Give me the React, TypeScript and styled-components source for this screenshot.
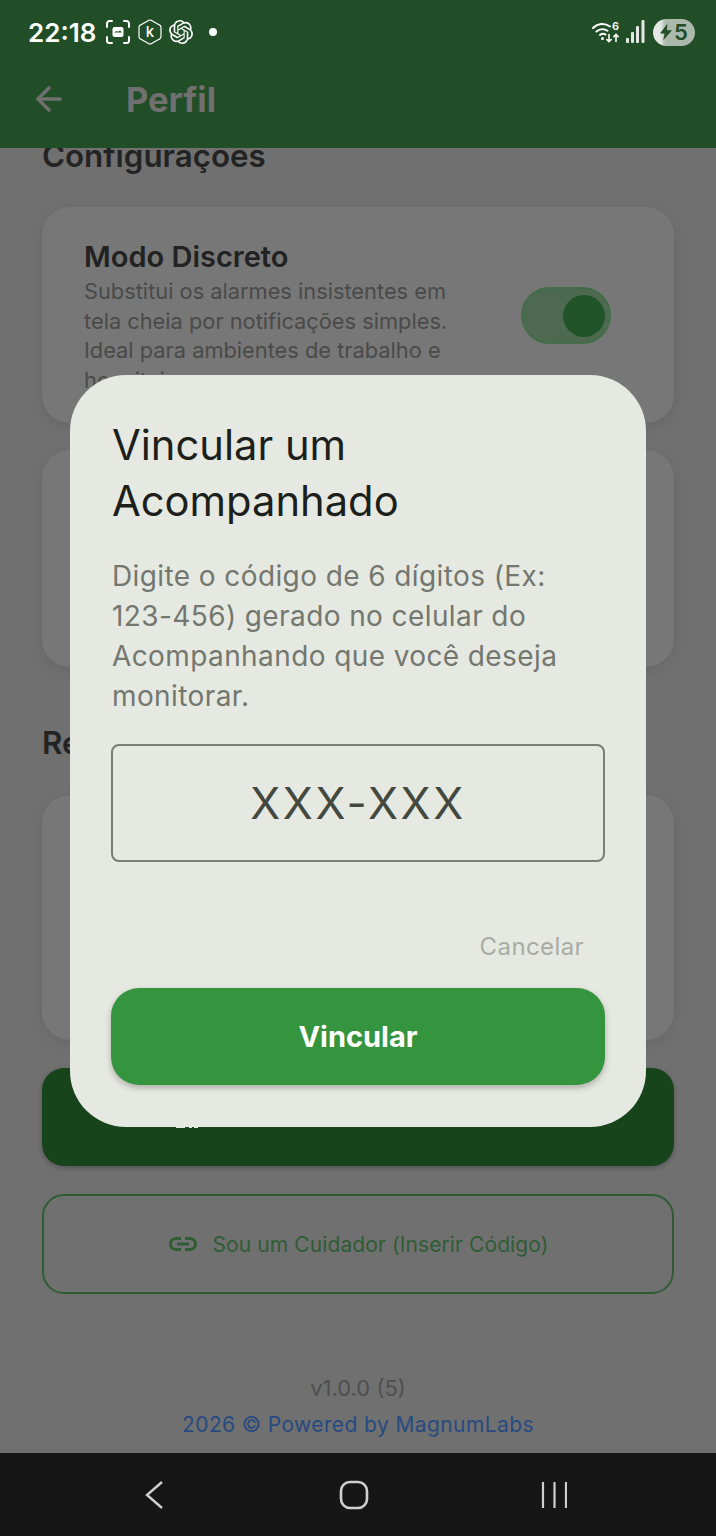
import { ArrowLeft } from "lucide-react";
import styled, { createGlobalStyle } from "styled-components";

const GlobalStyle = createGlobalStyle`
    html, body {
        margin: 0;
        padding: 0;
        background: #707070;
    }
    * {
        box-sizing: border-box;
    }
`;

const Screen = styled.div`
    position: relative;
    width: 716px;
    height: 1536px;
    display: flex;
    flex-direction: column;
    overflow: hidden;
    font-family: Inter, "Noto Sans", sans-serif;
    background: #707070;
`;

const TopBar = styled.header`
    position: relative;
    z-index: 2;
    height: 148px;
    flex: none;
    background: #214d27;
`;

const StatusBar = styled.div`
    height: 64px;
    padding: 0 21px 0 28px;
    display: flex;
    align-items: center;
    color: #fff;
`;

const Clock = styled.span`
    font-size: 26px;
    font-weight: 600;
    margin-right: 10px;
`;

const StatusIcons = styled.div`
    display: flex;
    align-items: center;
    gap: 7.5px;
`;

const Dot = styled.span`
    width: 8px;
    height: 8px;
    margin-left: 8px;
    border-radius: 50%;
    background: #fff;
`;

const StatusRight = styled.div`
    margin-left: auto;
    display: flex;
    align-items: center;
    gap: 6px;
`;

const Battery = styled.div`
    width: 42px;
    height: 27px;
    border-radius: 14px;
    margin-left: 2px;
    background: linear-gradient(90deg, #e4e8e4 0 18%, #abb8ac 30%);
    color: #214d27;
    display: flex;
    align-items: center;
    justify-content: center;
    gap: 2px;
    font-size: 22px;
    font-weight: 600;
`;

const HeaderRow = styled.div`
    height: 70px;
    padding: 0 30px;
    display: flex;
    align-items: center;
    gap: 58px;
    color: #707070;
`;

const HeaderTitle = styled.h1`
    margin: 0;
    font-size: 34.5px;
    font-weight: 700;
`;

const Content = styled.main`
    flex: 1;
    min-height: 0;
    overflow: hidden;
    padding: 0 42px;
    display: flex;
    flex-direction: column;
`;

const SectionTitle = styled.h2<{ $top: number; $bottom: number }>`
    margin: ${(p) => p.$top}px 0 ${(p) => p.$bottom}px;
    font-size: 31.3px;
    line-height: 38px;
    font-weight: 600;
    color: #232323;
`;

const Card = styled.section<{ $height: number }>`
    height: ${(p) => p.$height}px;
    flex: none;
    margin-bottom: 27px;
    padding: 34px 42px;
    border-radius: 28px;
    background: #777777;
    box-shadow: 0 4px 14px rgba(0, 0, 0, 0.08);
    display: flex;
    align-items: flex-start;
    justify-content: space-between;
    overflow: hidden;
`;

const CardText = styled.div`
    width: 372px;
`;

const CardTitle = styled.h3`
    margin: 0 0 4px;
    font-size: 29px;
    line-height: 32px;
    font-weight: 600;
    color: #222222;
`;

const CardBody = styled.p`
    margin: 0;
    font-size: 21.8px;
    line-height: 29.6px;
    color: #4a4a4a;
`;

const Toggle = styled.div`
    width: 90px;
    height: 57px;
    margin: 46px 21px 0 0;
    padding: 0 4px;
    border-radius: 29px;
    background: #4d6a50;
    border: 2px solid #436d49;
    display: flex;
    align-items: center;
    justify-content: flex-end;
`;

const ToggleThumb = styled.span`
    width: 42px;
    height: 42px;
    border-radius: 50%;
    background: #215329;
`;

const PrimaryButton = styled.div`
    height: 98px;
    flex: none;
    margin-top: 1px;
    padding-bottom: 3px;
    border-radius: 22px;
    background: #17441b;
    box-shadow: 0 2px 5px rgba(0, 0, 0, 0.25);
    color: #e6e9e1;
    display: flex;
    align-items: center;
    justify-content: center;
    gap: 11px;
    font-size: 20px;
    font-weight: 600;
`;

const OutlineButton = styled.div`
    height: 100px;
    flex: none;
    margin-top: 28px;
    padding-left: 2px;
    border-radius: 22px;
    border: 2px solid #2f5c35;
    color: #2f5c35;
    display: flex;
    align-items: center;
    justify-content: center;
    gap: 15px;
    font-size: 21px;
    letter-spacing: 0.1px;
`;

const Footer = styled.footer`
    margin-top: 82px;
    display: flex;
    flex-direction: column;
    align-items: center;
    gap: 11px;
    font-size: 21px;
    line-height: 25px;
`;

const Version = styled.span`
    font-size: 22px;
    color: #4f4f4f;
`;

const Powered = styled.span`
    color: #274a80;
    letter-spacing: 0.4px;
`;

const NavBar = styled.nav`
    position: relative;
    z-index: 4;
    height: 83px;
    flex: none;
    background: #161616;
    display: grid;
    grid-template-columns: 308px 100px 308px;
    align-items: center;
    color: #d0d0d0;
`;

const NavSlot = styled.div<{ $offset: number }>`
    display: flex;
    justify-content: center;
    transform: translateX(${(p) => p.$offset}px);
`;

const Overlay = styled.div`
    position: absolute;
    inset: 0 0 34px;
    z-index: 3;
    display: flex;
    align-items: center;
    justify-content: center;
`;

const Dialog = styled.div`
    width: 576px;
    padding: 42px 41px;
    border-radius: 56px;
    background: #e6e9e1;
    display: flex;
    flex-direction: column;
`;

const DialogTitle = styled.h2`
    margin: 0 0 27px;
    padding-left: 1px;
    font-size: 41.7px;
    line-height: 56px;
    font-weight: 400;
    color: #1c1f1b;
`;

const DialogBody = styled.p`
    margin: 0 0 28px;
    padding-left: 1px;
    font-size: 28px;
    line-height: 40px;
    letter-spacing: 0.4px;
    color: #73776f;
`;

const CodeField = styled.div`
    height: 118px;
    border: 2px solid #7a7f75;
    border-radius: 8px;
    display: flex;
    align-items: center;
    justify-content: center;
    font-size: 44px;
    letter-spacing: 2.6px;
    color: #444940;
`;

const CancelRow = styled.div`
    height: 126px;
    display: flex;
    align-items: center;
    justify-content: flex-end;
    padding: 42px 21px 0 0;
    font-size: 24px;
    letter-spacing: 0.4px;
    color: #a9aca5;
`;

const ConfirmButton = styled.div`
    height: 97px;
    border-radius: 28px;
    background: #34953e;
    box-shadow: 0 3px 6px rgba(0, 0, 0, 0.25);
    color: #fff;
    display: flex;
    align-items: center;
    justify-content: center;
    font-size: 29px;
    font-weight: 700;
`;

const ScreenshotIcon = () => (
    <svg width="24" height="24" viewBox="0 0 24 24" fill="none" stroke="#fff" strokeWidth="2" strokeLinecap="round">
        <path d="M1 7V3.5A2.5 2.5 0 0 1 3.5 1H6M18 1h2.5A2.5 2.5 0 0 1 23 3.5V7M23 17v3.5a2.5 2.5 0 0 1-2.5 2.5H18M6 23H3.5A2.5 2.5 0 0 1 1 20.5V17" />
        <rect x="6.5" y="7" width="11" height="10" rx="2" fill="#fff" stroke="none" />
        <path d="M8 12.5h8l-2-2-2 1.2-1.500-.8z" fill="#214d27" stroke="none" />
    </svg>
);

const KasperskyIcon = () => (
    <svg width="24" height="26" viewBox="0 0 24 26" fill="none" stroke="#fff" strokeWidth="1.2" strokeLinejoin="round">
        <path d="M10.5 1.400q1.5-.8 3 0l8 4.500q1.500.8 1.500 2.500v9.200q0 1.700-1.500 2.500l-8 4.500q-1.500.8-3 0l-8-4.500Q1 19.300 1 17.600V8.400q0-1.700 1.500-2.500z" />
        <text x="12" y="18" textAnchor="middle" fontFamily="Inter, sans-serif" fontSize="15" fontWeight="500" fill="#fff" stroke="none">
            k
        </text>
    </svg>
);

const OpenAiIcon = () => (
    <svg width="24" height="24" viewBox="0 0 24 24" fill="#fff">
        <path d="M22.2819 9.8211a5.9847 5.9847 0 0 0-.5157-4.9108 6.0462 6.0462 0 0 0-6.5098-2.9A6.0651 6.0651 0 0 0 4.9807 4.1818a5.9847 5.9847 0 0 0-3.9977 2.9 6.0462 6.0462 0 0 0 .7427 7.0966 5.98 5.98 0 0 0 .511 4.9107 6.051 6.051 0 0 0 6.5146 2.9001A5.9847 5.9847 0 0 0 13.2599 24a6.0557 6.0557 0 0 0 5.7718-4.2058 5.9894 5.9894 0 0 0 3.9977-2.9001 6.0557 6.0557 0 0 0-.7475-7.0729zm-9.022 12.6081a4.4755 4.4755 0 0 1-2.8764-1.0408l.1419-.0804 4.7783-2.7582a.7948.7948 0 0 0 .3927-.6813v-6.7369l2.02 1.1686a.071.071 0 0 1 .038.052v5.5826a4.504 4.504 0 0 1-4.4945 4.4944zm-9.6607-4.1254a4.4708 4.4708 0 0 1-.5346-3.0137l.142.0852 4.783 2.7582a.7712.7712 0 0 0 .7806 0l5.8428-3.3685v2.3324a.0804.0804 0 0 1-.0332.0615L9.74 19.9502a4.4992 4.4992 0 0 1-6.1408-1.6464zM2.3408 7.8956a4.485 4.485 0 0 1 2.3655-1.9728V11.6a.7664.7664 0 0 0 .3879.6765l5.8144 3.3543-2.0201 1.1685a.0757.0757 0 0 1-.071 0l-4.8303-2.7865A4.504 4.504 0 0 1 2.3408 7.872zm16.5963 3.8558L13.1038 8.364 15.1192 7.2a.0757.0757 0 0 1 .071 0l4.8303 2.7913a4.4944 4.4944 0 0 1-.6765 8.1042v-5.6772a.79.79 0 0 0-.407-.667zm2.0107-3.0231l-.142-.0852-4.7735-2.7818a.7759.7759 0 0 0-.7854 0L9.409 9.2297V6.8974a.0662.0662 0 0 1 .0284-.0615l4.8303-2.7866a4.4992 4.4992 0 0 1 6.6802 4.66zM8.3065 12.863l-2.02-1.1638a.0804.0804 0 0 1-.038-.0567V6.0742a4.4992 4.4992 0 0 1 7.3757-3.4537l-.142.0805L8.704 5.459a.7948.7948 0 0 0-.3927.6813zm1.0976-2.3654l2.602-1.4998 2.6069 1.4998v2.9994l-2.5974 1.4997-2.6067-1.4997Z" />
    </svg>
);

const WifiIcon = () => (
    <svg width="28" height="26" viewBox="0 0 28 26" fill="none" stroke="#fff" strokeWidth="2" strokeLinecap="round">
        <path d="M1 9c5-5 12-5 17-1.500M4.500 12.500c3.500-3 8-3 11-.8M8 16c1.800-1.400 4-1.400 5.500-.5" />
        <circle cx="10.5" cy="19.5" r="1.5" fill="#fff" stroke="none" />
        <text x="23.5" y="11" textAnchor="middle" fontFamily="Inter, sans-serif" fontSize="11" fontWeight="600" fill="#fff" stroke="none">
            6
        </text>
        <path d="M17 15.500v7M14.800 20.500l2.200 2.200 2.200-2.200M24 22.500v-7M21.800 17.700l2.200-2.200 2.200 2.200" strokeWidth="1.6" />
    </svg>
);

const SignalIcon = () => (
    <svg width="19" height="26" viewBox="0 0 19 26" fill="#e4e8e4">
        <rect x="0" y="19" width="3" height="5" rx="1" />
        <rect x="5" y="13" width="3" height="11" rx="1" />
        <rect x="10" y="7" width="3" height="17" rx="1" />
        <rect x="15.5" y="1" width="3" height="23" rx="1" />
    </svg>
);

const BoltIcon = () => (
    <svg width="12" height="18" viewBox="0 0 13 18" fill="#214d27">
        <path d="M8 0L0 10.500h5L3.500 18 13 7H7.500z" />
    </svg>
);

const QrIcon = () => (
    <svg width="26" height="24" viewBox="0 0 26 24" fill="currentColor">
        <path d="M2 14h9v10H2zM15 21h3v3h-3zM20 21h4v3h-4zM15 1h9v9h-9zM2 1h9v9H2z" />
    </svg>
);

const LinkIcon = () => (
    <svg width="28" height="14" viewBox="0 0 28 14" fill="none" stroke="currentColor" strokeWidth="3">
        <path d="M12 1.500H7a5.500 5.500 0 0 0 0 11h5M16 1.500h5a5.500 5.500 0 0 1 0 11h-5M8 7h12" />
    </svg>
);

const NavBack = () => (
    <svg width="20" height="30" viewBox="0 0 20 30" fill="none" stroke="currentColor" strokeWidth="2.4">
        <path d="M18 2L3 15l15 13" />
    </svg>
);

const NavHome = () => (
    <svg width="30" height="30" viewBox="0 0 30 30" fill="none" stroke="currentColor" strokeWidth="2.6">
        <rect x="2" y="2" width="26" height="26" rx="9" />
    </svg>
);

const NavRecents = () => (
    <svg width="26" height="28" viewBox="0 0 26 28" stroke="currentColor" strokeWidth="2.2">
        <path d="M2 1v26M13.5 1v26M25 1v26" />
    </svg>
);

export default function App() {
    return (
        <Screen>
            <GlobalStyle />
            <TopBar>
                <StatusBar>
                    <Clock>22:18</Clock>
                    <StatusIcons>
                        <ScreenshotIcon />
                        <KasperskyIcon />
                        <OpenAiIcon />
                        <Dot />
                    </StatusIcons>
                    <StatusRight>
                        <WifiIcon />
                        <SignalIcon />
                        <Battery>
                            <BoltIcon />5
                        </Battery>
                    </StatusRight>
                </StatusBar>
                <HeaderRow>
                    <ArrowLeft size={38} strokeWidth={2.2} />
                    <HeaderTitle>Perfil</HeaderTitle>
                </HeaderRow>
            </TopBar>
            <Content>
                <SectionTitle $top={-11} $bottom={32}>
                    Configurações
                </SectionTitle>
                <Card $height={216}>
                    <CardText>
                        <CardTitle>Modo Discreto</CardTitle>
                        <CardBody>
                            Substitui os alarmes insistentes em tela cheia por
                            notificações simples. Ideal para ambientes de
                            trabalho e hospitais.
                        </CardBody>
                    </CardText>
                    <Toggle>
                        <ToggleThumb />
                    </Toggle>
                </Card>
                <Card $height={217} />
                <SectionTitle $top={30} $bottom={33}>
                    Rede de Cuidado
                </SectionTitle>
                <Card $height={245} />
                <PrimaryButton>
                    <QrIcon />
                    Sou Acompanhado (Gerar Código)
                </PrimaryButton>
                <OutlineButton>
                    <LinkIcon />
                    Sou um Cuidador (Inserir Código)
                </OutlineButton>
                <Footer>
                    <Version>v1.0.0 (5)</Version>
                    <Powered>2026 © Powered by MagnumLabs</Powered>
                </Footer>
            </Content>
            <NavBar>
                <NavSlot $offset={0}>
                    <NavBack />
                </NavSlot>
                <NavSlot $offset={-4}>
                    <NavHome />
                </NavSlot>
                <NavSlot $offset={-8}>
                    <NavRecents />
                </NavSlot>
            </NavBar>
            <Overlay>
                <Dialog>
                    <DialogTitle>Vincular um Acompanhado</DialogTitle>
                    <DialogBody>
                        Digite o código de 6 dígitos (Ex: 123-456) gerado no
                        celular do Acompanhando que você deseja monitorar.
                    </DialogBody>
                    <CodeField>XXX-XXX</CodeField>
                    <CancelRow>Cancelar</CancelRow>
                    <ConfirmButton>Vincular</ConfirmButton>
                </Dialog>
            </Overlay>
        </Screen>
    );
}
